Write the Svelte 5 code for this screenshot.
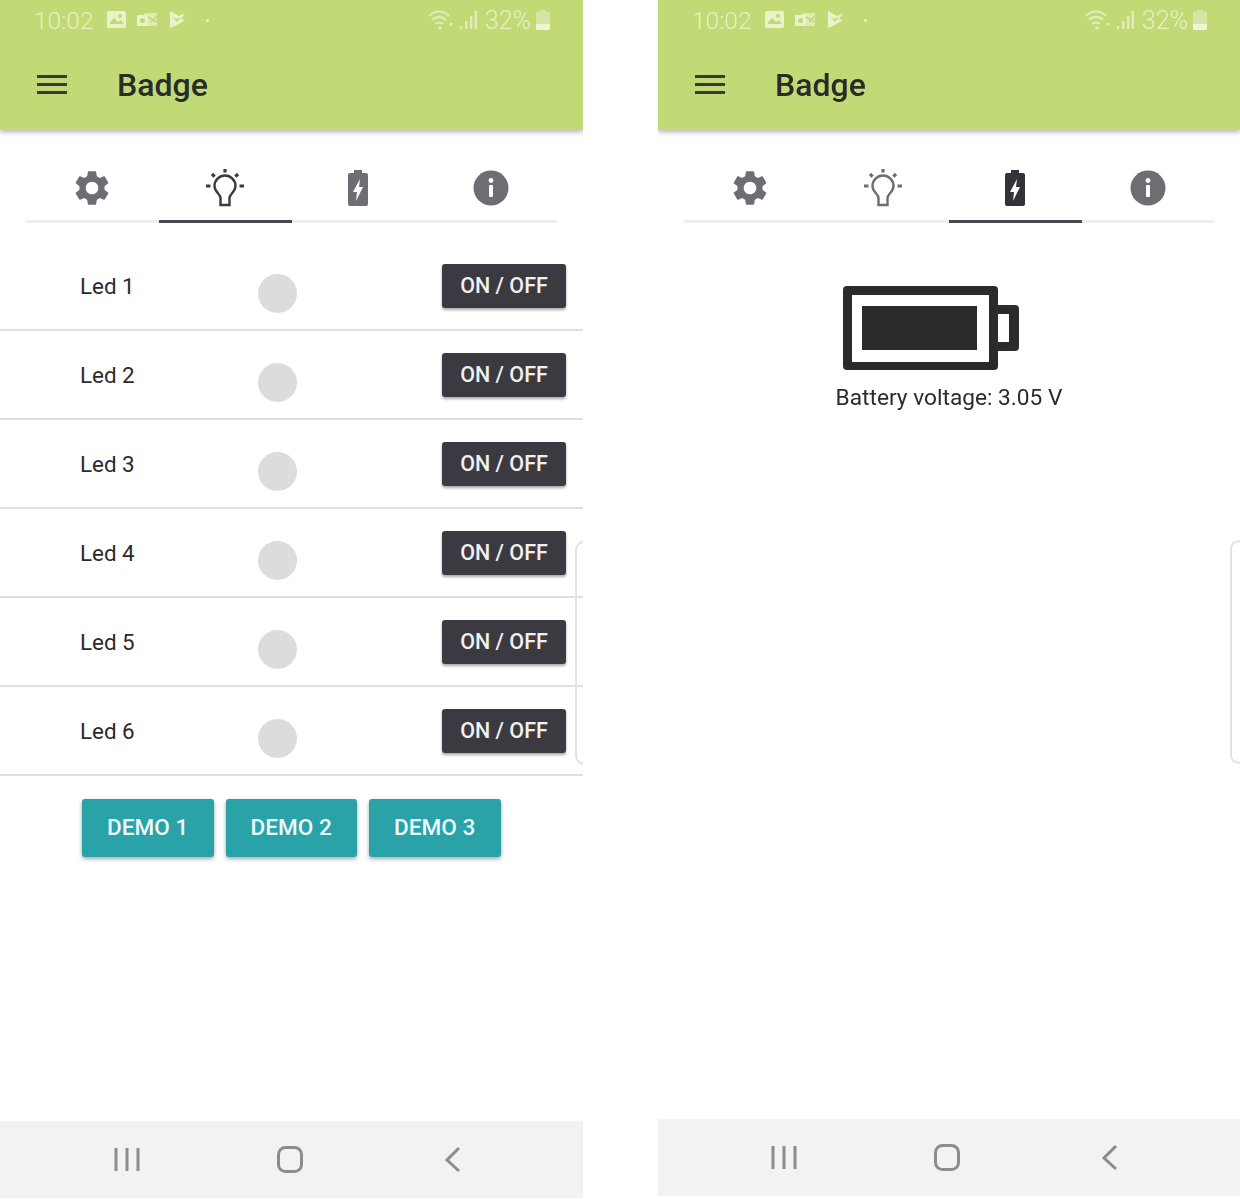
<script>
	const leds = [1, 2, 3, 4, 5, 6];
	const demos = [1, 2, 3];
	const gear =
		'M19.14 12.94c.04-.3.06-.61.06-.94 0-.32-.02-.64-.07-.94l2.03-1.58c.18-.14.23-.41.12-.61l-1.92-3.32c-.12-.22-.37-.29-.59-.22l-2.39.96c-.5-.38-1.03-.7-1.62-.94l-.36-2.54c-.04-.24-.24-.41-.48-.41h-3.84c-.24 0-.43.17-.47.41l-.36 2.54c-.59.24-1.13.57-1.62.94l-2.39-.96c-.22-.08-.47 0-.59.22L2.74 8.87c-.12.21-.08.47.12.61l2.03 1.58c-.05.3-.09.63-.09.94s.02.64.07.94l-2.03 1.58c-.18.14-.23.41-.12.61l1.92 3.32c.12.22.37.29.59.22l2.39-.96c.5.38 1.03.7 1.62.94l.36 2.54c.05.24.24.41.48.41h3.84c.24 0 .44-.17.47-.41l.36-2.54c.59-.24 1.13-.56 1.62-.94l2.39.96c.22.08.47 0 .59-.22l1.92-3.32c.12-.22.07-.47-.12-.61l-2.01-1.58zM12 15.6c-1.98 0-3.6-1.62-3.6-3.6s1.62-3.6 3.6-3.6 3.6 1.62 3.6 3.6-1.62 3.6-3.6 3.6z';
</script>

{#snippet statusbar()}
	<div class="status">
		<span class="time">10:02</span>
		<svg class="notif" width="82" height="24" viewBox="0 0 82 24">
			<rect x="0" y="3" width="19" height="17" rx="2" fill="#e9f2cb" />
			<path d="M2 16l5-6 4 4 3-2 3 4z" fill="#c1da75" />
			<circle cx="13" cy="8" r="2" fill="#c1da75" />
			<rect x="37" y="5" width="13" height="13" rx="1" fill="#dfebb6" />
			<rect x="30" y="7" width="11" height="11" fill="#e9f2cb" />
			<circle cx="35.5" cy="12.5" r="2.5" fill="#c1da75" />
			<path d="M41 9l9 5M50 8l-6 6" stroke="#c1da75" stroke-width="1.5" />
			<path d="M63 3l9 5 6-3-4 6 4 1-8 5-7 3z" fill="#e9f2cb" />
			<path d="M65 8l4 3 5-2-4 5" fill="#c1da75" />
		</svg>
		<span class="dot"></span>
		<span class="grow"></span>
		<svg width="26" height="22" viewBox="0 0 26 22" fill="none" stroke="#e2edbc" stroke-width="2">
			<path d="M1 7c6-6 14-6 20 0M4 11c4-4 10-4 14 0M7 15c3-2 5-2 8 0" />
			<circle cx="12" cy="19" r="1.8" fill="#e2edbc" stroke="none" />
			<circle cx="23" cy="15" r="1.6" fill="#e2edbc" stroke="none" />
		</svg>
		<svg class="signal" width="17" height="20" viewBox="0 0 17 20" fill="#e2edbc">
			<rect x="0" y="16" width="2" height="3" />
			<rect x="5" y="11" width="2.4" height="8" />
			<rect x="10" y="6" width="2.4" height="13" />
			<rect x="14.6" y="1" width="2.4" height="18" />
		</svg>
		<span class="pct">32%</span>
		<svg class="batt" width="14" height="20" viewBox="0 0 14 20">
			<path d="M4 0h6v2h3a1 1 0 0 1 1 1v16a1 1 0 0 1-1 1H1a1 1 0 0 1-1-1V3a1 1 0 0 1 1-1h3z" fill="#d5e5a3" />
			<path d="M0 14h14v5a1 1 0 0 1-1 1H1a1 1 0 0 1-1-1z" fill="#eef5d6" />
		</svg>
	</div>
{/snippet}

{#snippet tabs(active)}
	<div class="tabs">
		<div class="tab" class:active={active === 0}>
			<svg width="42" height="42" viewBox="0 0 24 24"><path d={gear} fill="#6f6d74" /></svg>
		</div>
		<div class="tab" class:active={active === 1}>
			<svg width="40" height="40" viewBox="0 0 40 40" fill="none" stroke={active === 1 ? '#3c3a41' : '#6f6d74'} stroke-width="2.4">
				<path d="M15.5 30c0-4-6-6-6-12a10.5 10.5 0 0 1 21 0c0 6-6 8-6 12v7h-9z" />
				<path d="M20 1v3.5M7 6l2.6 2.6M33 6l-2.6 2.6M1 18h4.5M34.5 18H39" stroke-width="3.2" />
			</svg>
		</div>
		<div class="tab" class:active={active === 2}>
			<svg width="20" height="38" viewBox="0 0 20 38">
				<path
					d="M6 1h8v3h4a2 2 0 0 1 2 2v29a2 2 0 0 1-2 2H2a2 2 0 0 1-2-2V6a2 2 0 0 1 2-2h4z"
					fill={active === 2 ? '#33313a' : '#6f6d74'}
				/>
				<path d="M12 10l-7 13h4l-1 9 7-14h-4z" fill="#fff" />
			</svg>
		</div>
		<div class="tab" class:active={active === 3}>
			<svg width="36" height="36" viewBox="0 0 36 36">
				<circle cx="18" cy="18" r="17.5" fill="#6f6d74" />
				<circle cx="18" cy="10.5" r="2.4" fill="#fff" />
				<rect x="16" y="15" width="4" height="12" rx="1" fill="#fff" />
			</svg>
		</div>
	</div>
{/snippet}

{#snippet navbar()}
	<div class="nav">
		<svg width="40" height="40" viewBox="0 0 40 40" stroke="#8c8c8c" stroke-width="3" fill="none">
			<path d="M9 8v23M20 8v23M31 8v23" />
		</svg>
		<svg width="40" height="40" viewBox="0 0 40 40" fill="none" stroke="#8c8c8c" stroke-width="3">
			<rect x="8.5" y="7.5" width="23" height="24" rx="7" />
		</svg>
		<svg width="40" height="40" viewBox="0 0 40 40" fill="none" stroke="#8c8c8c" stroke-width="3">
			<path d="M26 8L14 20l12 11" />
		</svg>
	</div>
{/snippet}

{#snippet appbar()}
	<header class="appbar">
		{@render statusbar()}
		<div class="toolbar">
			<div class="burger"><span></span><span></span><span></span></div>
			<h1>Badge</h1>
		</div>
	</header>
{/snippet}

<div class="screens">
	<section class="phone left">
		{@render appbar()}
		{@render tabs(1)}
		<div class="leds">
			{#each leds as n}
				<div class="row">
					<span class="label">Led {n}</span>
					<span class="lamp"></span>
					<button class="toggle">ON / OFF</button>
				</div>
			{/each}
		</div>
		<div class="demos">
			{#each demos as d}
				<button class="demo">DEMO {d}</button>
			{/each}
		</div>
		<div class="edge"></div>
		{@render navbar()}
	</section>

	<section class="phone right">
		{@render appbar()}
		{@render tabs(2)}
		<div class="battery">
			<svg width="178" height="85" viewBox="0 0 178 85">
				<path
					d="M5 0h147a4 4 0 0 1 4 4v15h17a4 4 0 0 1 4 4v38a4 4 0 0 1-4 4h-17v15a4 4 0 0 1-4 4H5a4 4 0 0 1-4-4V4a4 4 0 0 1 4-4z"
					fill="#2b2b2b"
				/>
				<rect x="10" y="9" width="137" height="67" fill="#fff" />
				<rect x="156" y="28" width="11" height="28" fill="#fff" />
				<rect x="20" y="20" width="115" height="44" fill="#2b2b2b" />
			</svg>
			<p>Battery voltage: 3.05 V</p>
		</div>
		<div class="edge"></div>
		{@render navbar()}
	</section>
</div>

<style>
	:global(body) {
		background: #fff;
	}

	.screens {
		display: flex;
		gap: 75px;
		width: 1240px;
		font-family: Roboto, 'Liberation Sans', sans-serif;
		color: #2b2b2b;
		filter: blur(0.7px);
	}

	.phone {
		position: relative;
		display: flex;
		flex-direction: column;
		overflow: hidden;
		background: #fff;
	}

	.phone.left {
		width: 583px;
		height: 1198px;
	}

	.phone.right {
		width: 582px;
		height: 1196px;
	}

	.appbar {
		position: relative;
		z-index: 1;
		height: 130px;
		flex-shrink: 0;
		background: #c1da75;
		box-shadow: 0 2px 5px rgba(0, 0, 0, 0.3);
	}

	.status {
		display: flex;
		align-items: center;
		height: 40px;
		padding: 0 33px 0 34px;
		color: #e6f0c4;
	}

	.time {
		width: 73px;
		font-size: 24.5px;
		font-weight: 300;
	}

	.dot {
		width: 3px;
		height: 3px;
		margin-left: 17px;
		border-radius: 50%;
		background: #e9f2cb;
	}

	.grow {
		flex: 1;
	}

	.signal {
		margin-left: 6px;
	}

	.pct {
		margin-left: 8px;
		font-size: 25px;
		font-weight: 300;
	}

	.batt {
		margin-left: 5px;
	}

	.toolbar {
		display: flex;
		align-items: center;
		gap: 50px;
		height: 90px;
		padding-left: 37px;
	}

	.burger {
		display: flex;
		flex-direction: column;
		gap: 5px;
		width: 30px;
		margin-bottom: 2px;
	}

	.burger span {
		height: 3px;
		background: #3a3a3a;
	}

	h1 {
		margin: 0;
		font-size: 32px;
		font-weight: 500;
		color: #2b2b2b;
	}

	.tabs {
		display: flex;
		box-sizing: border-box;
		height: 93px;
		margin: 0 26px;
		border-bottom: 3px solid #eeeeee;
		flex-shrink: 0;
	}

	.tab {
		display: flex;
		align-items: center;
		justify-content: center;
		flex: 1;
		height: 93px;
		padding-top: 26px;
		box-sizing: border-box;
		border-bottom: 3px solid transparent;
	}

	.tab.active {
		border-bottom-color: #4a484f;
	}

	.leds {
		margin-top: 19px;
	}

	.row {
		display: flex;
		align-items: center;
		height: 87px;
		padding: 0 17px 0 80px;
		border-bottom: 2px solid #e0e0e0;
	}

	.label {
		width: 178px;
		font-size: 22.4px;
	}

	.lamp {
		width: 39px;
		height: 39px;
		margin-top: 16px;
		border-radius: 50%;
		background: #dcdcdc;
	}

	.toggle {
		width: 124px;
		height: 44px;
		margin-left: auto;
		padding: 0;
		border: none;
		border-radius: 3px;
		background: #3c3a41;
		box-shadow: 0 2px 3px rgba(0, 0, 0, 0.35);
		color: #f0f0f0;
		font: 500 21.5px Roboto, 'Liberation Sans', sans-serif;
	}

	.demos {
		display: flex;
		gap: 12px;
		margin: 23px 0 0 82px;
	}

	.demo {
		width: 131.5px;
		height: 58px;
		padding: 0 0 1px;
		border: none;
		border-radius: 3px;
		background: #29a2a8;
		box-shadow: 0 2px 4px rgba(0, 0, 0, 0.35);
		color: #eef9f9;
		font: 500 22.6px Roboto, 'Liberation Sans', sans-serif;
	}

	.edge {
		position: absolute;
		top: 541px;
		right: -10px;
		width: 14px;
		height: 220px;
		border: 2px solid #e2e2e2;
		border-radius: 10px;
	}

	.phone.right .edge {
		top: 540px;
		right: -8px;
	}

	.battery {
		display: flex;
		flex-direction: column;
		align-items: center;
		margin-top: 63px;
	}

	.battery svg {
		margin-right: 37px;
	}

	.battery p {
		margin: 13px 0 0;
		font-size: 22.7px;
		color: #2b2b2b;
	}

	.nav {
		display: flex;
		align-items: center;
		justify-content: center;
		gap: 123px;
		height: 77px;
		margin-top: auto;
		padding-right: 4px;
		background: #f2f2f2;
	}
</style>
